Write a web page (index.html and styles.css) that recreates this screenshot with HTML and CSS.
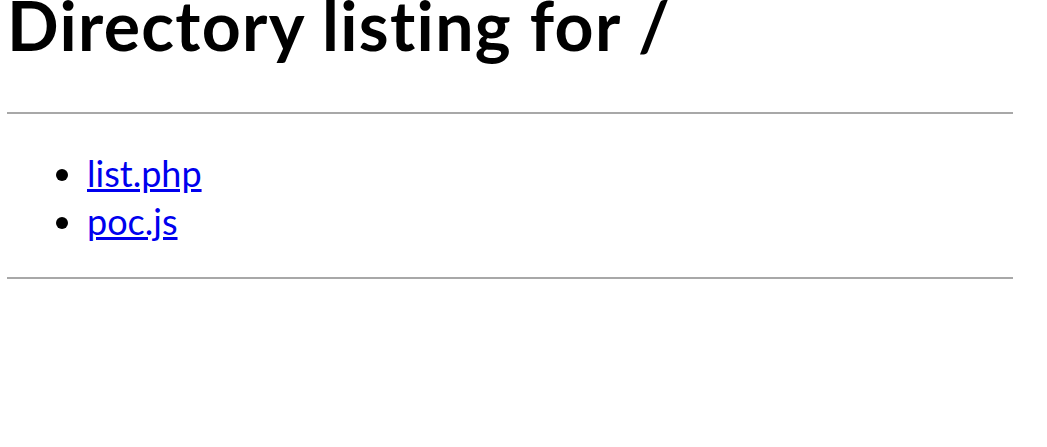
FILE: index.html
```html
<!DOCTYPE html>
<html>
<head>
<meta charset="utf-8">
<title>Directory listing for /</title>
<link rel="stylesheet" href="styles.css">
</head>
<body>
<h1 class="title">Directory listing for /</h1>
<hr class="rule">
<ul class="listing">
<li><a href="list.php">list.php</a></li>
<li><a href="poc.js">poc.js</a></li>
</ul>
<hr class="rule">
</body>
</html>
```
FILE: styles.css
```css
html, body {
  margin: 0;
  background: #fff;
}
body {
  padding: 0 34px 0 7px;
  font-family: Lato, "Noto Sans", sans-serif;
  font-variant-ligatures: none;
  color: #000;
}
.title {
  margin: -17px 0 45px 0;
  font-size: 68px;
  line-height: 84px;
  font-weight: 700;
  letter-spacing: 1.3px;
}
.rule {
  margin: 0;
  border: 0;
  height: 2px;
  background: #a8a8a8;
}
.listing {
  margin: 35px 0 32px 0;
  padding-left: 80px;
  font-size: 36px;
  line-height: 48px;
}
.listing a {
  color: #0000ee;
}
```
